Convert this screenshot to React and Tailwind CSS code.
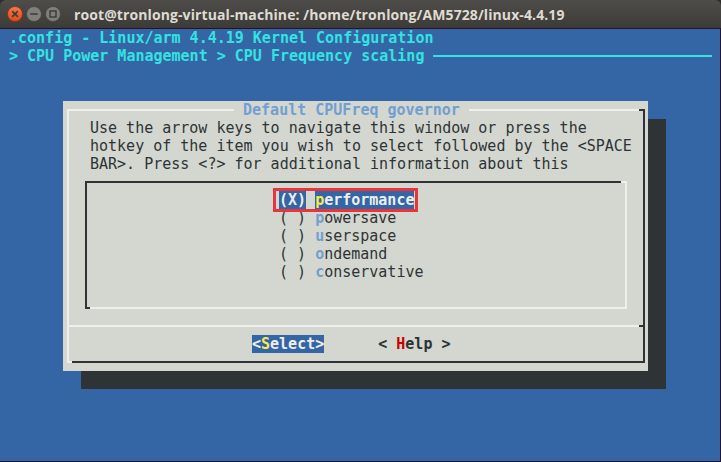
import React from 'react';

const LIGHT = 'light';
const DARK = 'dark';

// one terminal cell is 9px wide, 18px tall
const HLine = ({ tone, className = 'flex-1' }) => (
  <div className={`h-[18px] flex items-center ${className}`}>
    <div className={`h-[2px] w-full ${tone === LIGHT ? 'bg-[#eeeeec]' : 'bg-[#2e3436]'}`} />
  </div>
);

const VCol = ({ tone }) => (
  <div className="w-[9px] shrink-0 flex pl-[4px]">
    <div className={`w-[2px] ${tone === LIGHT ? 'bg-[#eeeeec]' : 'bg-[#2e3436]'}`} />
  </div>
);

const Corner = ({ kind, tone }) => {
  const shape = {
    tl: 'ml-[4px] mt-[8px] w-[5px] h-[10px] border-l-2 border-t-2',
    tr: 'mt-[8px] w-[6px] h-[10px] border-r-2 border-t-2',
    bl: 'ml-[4px] w-[5px] h-[10px] border-l-2 border-b-2',
    br: 'w-[6px] h-[10px] border-r-2 border-b-2',
  }[kind];
  const color = tone === LIGHT ? 'border-[#eeeeec]' : 'border-[#2e3436]';
  return (
    <div className="w-[9px] h-[18px] shrink-0">
      <div className={`${shape} ${color}`} />
    </div>
  );
};

const LTee = () => (
  <div className="w-[9px] h-[18px] shrink-0 flex items-center pl-[4px]">
    <div className="w-[2px] self-stretch bg-[#eeeeec]" />
    <div className="flex-1 h-[2px] bg-[#eeeeec]" />
  </div>
);

const RTee = () => (
  <div className="w-[9px] h-[18px] shrink-0 flex items-center pr-[3px]">
    <div className="flex-1 h-[2px] bg-[#2e3436]" />
    <div className="w-[2px] self-stretch bg-[#2e3436]" />
  </div>
);

const TitleBar = () => (
  <div className="h-[29px] shrink-0 flex items-center pl-[7px] rounded-t-[6px] border-b border-[#2c1228] bg-gradient-to-b from-[#4e4d49] to-[#3c3b37]">
    <svg width="16" height="16" viewBox="0 0 16 16">
      <defs>
        <linearGradient id="cls" x1="0" y1="0" x2="0" y2="1">
          <stop offset="0" stopColor="#f37a4e" />
          <stop offset="1" stopColor="#de4a1a" />
        </linearGradient>
      </defs>
      <circle cx="8" cy="8" r="7.5" fill="url(#cls)" stroke="#8f2f12" strokeWidth="0.8" />
      <path d="M5.6 5.6 L10.4 10.4 M10.4 5.6 L5.6 10.4" stroke="#3c3b37" strokeWidth="1.6" strokeLinecap="round" />
    </svg>
    <svg width="16" height="16" viewBox="0 0 16 16" className="ml-[3px]">
      <circle cx="8" cy="8" r="7.5" fill="#817f7a" stroke="#45443f" strokeWidth="0.8" />
      <path d="M4.8 8 L11.2 8" stroke="#3c3b37" strokeWidth="1.6" strokeLinecap="round" />
    </svg>
    <svg width="16" height="16" viewBox="0 0 16 16" className="ml-[3px]">
      <circle cx="8" cy="8" r="7.5" fill="#817f7a" stroke="#45443f" strokeWidth="0.8" />
      <rect x="5" y="5" width="6" height="6" fill="none" stroke="#3c3b37" strokeWidth="1.4" />
    </svg>
    <span className="ml-[13px] text-[14px] tracking-[0.1px] font-bold text-[#dfdbd2] font-['Open_Sans',sans-serif] whitespace-pre">
      root@tronlong-virtual-machine: /home/tronlong/AM5728/linux-4.4.19
    </span>
  </div>
);

const MenuItem = ({ hot, rest }) => (
  <div className="h-[18px] pl-[189px] flex whitespace-pre">
    <span className="text-[#2e3436]">( ) </span>
    <span className="font-bold text-[#729fcf]">{hot}</span>
    <span className="text-[#2e3436]">{rest}</span>
  </div>
);

const App = () => {
  const items = [
    ['p', 'owersave'],
    ['u', 'serspace'],
    ['o', 'ndemand'],
    ['c', 'onservative'],
  ];

  return (
    <div className="w-[721px] h-[462px] flex flex-col bg-[#2f2e2b] overflow-hidden">
      <TitleBar />

      <div className="flex-1 bg-[#3465a4] border-r border-b border-[#2c1228] font-['DejaVu_Sans_Mono',monospace] text-[15px] leading-[18px]">
        <div className="h-[18px] pl-[9px] font-bold text-[#34e2e2] whitespace-pre">
          .config - Linux/arm 4.4.19 Kernel Configuration
        </div>
        <div className="h-[18px] pl-[9px] flex font-bold text-[#34e2e2] whitespace-pre">
          <span>{'> CPU Power Management > CPU Frequency scaling '}</span>
          <HLine tone={LIGHT} className="w-[279px] [&>div]:bg-[#34e2e2]" />
        </div>
        <div className="h-[36px]" />

        {/* dialog */}
        <div className="ml-[63px] w-[585px] bg-[#d3d7cf] shadow-[18px_18px_0_0_#2e3436] flex flex-col">
          <div className="flex h-[18px]">
            <Corner kind="tl" tone={LIGHT} />
            <HLine tone={LIGHT} className="w-[162px]" />
            <span className="whitespace-pre font-bold text-[#729fcf]"> Default CPUFreq governor </span>
            <HLine tone={LIGHT} />
            <Corner kind="tr" tone={DARK} />
          </div>

          <div className="flex">
            <VCol tone={LIGHT} />
            <div className="flex-1 flex flex-col">
              <div className="pl-[18px] text-[#2e3436] whitespace-pre">
                <div className="h-[18px]">Use the arrow keys to navigate this window or press the</div>
                <div className="h-[18px]">hotkey of the item you wish to select followed by the &lt;SPACE</div>
                <div className="h-[18px]">BAR&gt;. Press &lt;?&gt; for additional information about this</div>
              </div>

              {/* menu box */}
              <div className="ml-[9px] w-[549px] flex flex-col">
                <div className="flex h-[18px]">
                  <Corner kind="tl" tone={DARK} />
                  <HLine tone={DARK} />
                  <Corner kind="tr" tone={LIGHT} />
                </div>
                <div className="flex">
                  <VCol tone={DARK} />
                  <div className="flex-1 flex flex-col">
                    <div className="h-[18px] pl-[189px] flex whitespace-pre">
                      <span className="relative flex">
                        <span className="bg-[#3465a4] text-[#eeeeec] font-bold">(X)</span>
                        <span> </span>
                        <span className="bg-[#3465a4] font-bold">
                          <span className="text-[#fce94f]">p</span>
                          <span className="text-[#eeeeec]">erformance</span>
                        </span>
                        <span className="absolute -left-[6px] -right-[4px] -top-[3px] -bottom-[3px] border-[3px] border-[#e8353b]" />
                      </span>
                    </div>
                    {items.map(([hot, rest]) => (
                      <MenuItem key={rest} hot={hot} rest={rest} />
                    ))}
                    <div className="h-[18px]" />
                  </div>
                  <VCol tone={LIGHT} />
                </div>
                <div className="flex h-[18px]">
                  <Corner kind="bl" tone={DARK} />
                  <HLine tone={LIGHT} />
                  <Corner kind="br" tone={LIGHT} />
                </div>
              </div>
            </div>
            <VCol tone={DARK} />
          </div>

          <div className="flex h-[18px]">
            <LTee />
            <HLine tone={LIGHT} />
            <RTee />
          </div>

          <div className="flex h-[18px]">
            <VCol tone={LIGHT} />
            <div className="flex-1 pl-[180px] flex whitespace-pre font-bold">
              <span className="bg-[#3465a4] text-[#eeeeec]">
                &lt;<span className="text-[#fce94f]">S</span>elect&gt;
              </span>
              <span className="ml-[54px] text-[#2e3436]">
                &lt; <span className="text-[#cc0000]">H</span>elp &gt;
              </span>
            </div>
            <VCol tone={DARK} />
          </div>

          <div className="flex h-[18px]">
            <Corner kind="bl" tone={LIGHT} />
            <HLine tone={DARK} />
            <Corner kind="br" tone={DARK} />
          </div>
        </div>
      </div>
    </div>
  );
};

export default App;
